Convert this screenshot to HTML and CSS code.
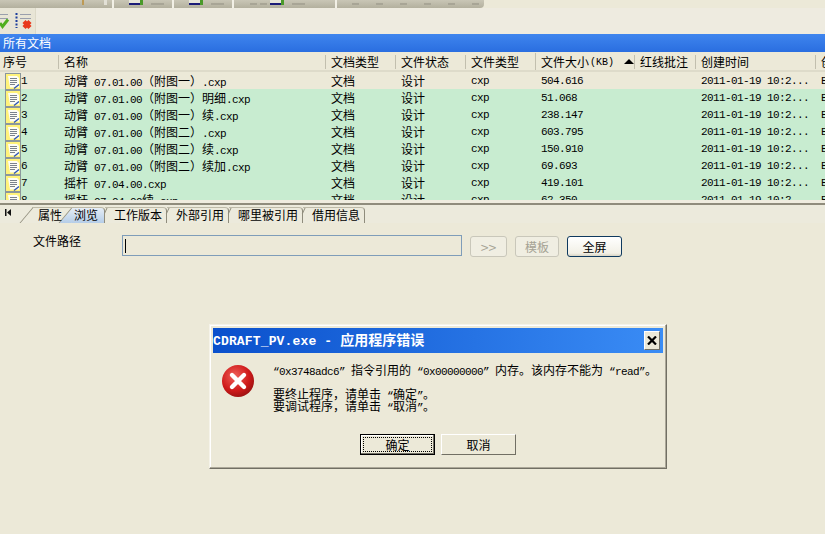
FILE: index.html
```html
<!DOCTYPE html>
<html lang="en">
<head>
  <meta charset="UTF-8">
  <title>CDRAFT_PV</title>
  <link rel="stylesheet" href="styles.css">
</head>
<body>
  <svg class="defs" width="0" height="0">
    <symbol id="doc" viewBox="0 0 16 17">
      <rect x="0.5" y="0.5" width="15" height="16" fill="#fff27a" stroke="#8b979b"/>
      <path d="M3 3h9l2 2v9.500H5z" fill="#fdfdf6"/>
      <path d="M5 5.500h7M5 7.500h7M5 9.500h7M5 11.500h5" stroke="#7a828c" fill="none"/>
      <path d="M9 15.500l5-4" stroke="#2f55b5" stroke-width="1.400" fill="none"/>
    </symbol>
  </svg>

  <div class="topbar">
    <div class="seg seg-a"><i class="dot"></i><i class="tick"></i></div>
    <div class="seg"><i class="navy"></i><i class="green"></i><i class="grey"></i></div>
    <div class="seg"><i class="navy"></i><i class="green"></i><i class="grey"></i></div>
    <div class="seg seg-b"><i class="grey-s"></i><i class="grey-s"></i><i class="navy"></i><i class="green"></i><i class="grey"></i></div>
    <div class="seg seg-c"><i class="grey-s"></i><i class="grey-s"></i><i class="grey-s"></i><i class="grey-s"></i><i class="grey-s"></i><i class="grey-s"></i></div>
  </div>

  <div class="toolbar">
    <div class="tool-group">
      <svg class="tool-a" width="10" height="18" viewBox="0 0 10 18">
        <path d="M0 1.500h8M0 5.500h8" stroke="#9a9fac" fill="none"/>
        <path d="M0 10l2.500 3.500 5.500-7" stroke="#4fae1e" stroke-width="3" fill="none"/>
      </svg>
      <svg class="tool-b" width="17" height="20" viewBox="0 0 17 20">
        <path d="M1.500 0v15" stroke="#1d3f9c" stroke-width="2" stroke-dasharray="2 1.500" fill="none"/>
        <path d="M5 1.500h11M5 5.500h11" stroke="#9a9fac" fill="none"/>
        <path d="M9 8.500l6 6M15 8.500l-6 6" stroke="#e8391d" stroke-width="4.400" fill="none"/>
      </svg>
    </div>
  </div>

  <div class="titlebar">所有文档</div>

  <div class="head grid">
    <div class="hcell first">序号</div>
    <div class="hcell">名称</div>
    <div class="hcell">文档类型</div>
    <div class="hcell">文件状态</div>
    <div class="hcell">文件类型</div>
    <div class="hcell sorted">文件大小<span class="la">(KB)</span><i class="sort-up"></i></div>
    <div class="hcell">红线批注</div>
    <div class="hcell">创建时间</div>
    <div class="hcell">创建人</div>
  </div>

  <div class="rows">
    <div class="row grid cur">
      <div class="cell num"><svg class="doc"><use href="#doc"/></svg><span class="la">1</span></div>
      <div class="cell">动臂<span class="la"> 07.01.00</span>（附图一）<span class="la">.cxp</span></div>
      <div class="cell">文档</div><div class="cell">设计</div><div class="cell la">cxp</div>
      <div class="cell la">504.616</div><div class="cell"></div>
      <div class="cell la">2011-01-19 10:2...</div><div class="cell la">E:\</div>
    </div>
    <div class="row grid">
      <div class="cell num"><svg class="doc"><use href="#doc"/></svg><span class="la">2</span></div>
      <div class="cell">动臂<span class="la"> 07.01.00</span>（附图一）明细<span class="la">.cxp</span></div>
      <div class="cell">文档</div><div class="cell">设计</div><div class="cell la">cxp</div>
      <div class="cell la">51.068</div><div class="cell"></div>
      <div class="cell la">2011-01-19 10:2...</div><div class="cell la">E:\</div>
    </div>
    <div class="row grid">
      <div class="cell num"><svg class="doc"><use href="#doc"/></svg><span class="la">3</span></div>
      <div class="cell">动臂<span class="la"> 07.01.00</span>（附图一）续<span class="la">.cxp</span></div>
      <div class="cell">文档</div><div class="cell">设计</div><div class="cell la">cxp</div>
      <div class="cell la">238.147</div><div class="cell"></div>
      <div class="cell la">2011-01-19 10:2...</div><div class="cell la">E:\</div>
    </div>
    <div class="row grid">
      <div class="cell num"><svg class="doc"><use href="#doc"/></svg><span class="la">4</span></div>
      <div class="cell">动臂<span class="la"> 07.01.00</span>（附图二）<span class="la">.cxp</span></div>
      <div class="cell">文档</div><div class="cell">设计</div><div class="cell la">cxp</div>
      <div class="cell la">603.795</div><div class="cell"></div>
      <div class="cell la">2011-01-19 10:2...</div><div class="cell la">E:\</div>
    </div>
    <div class="row grid">
      <div class="cell num"><svg class="doc"><use href="#doc"/></svg><span class="la">5</span></div>
      <div class="cell">动臂<span class="la"> 07.01.00</span>（附图二）续<span class="la">.cxp</span></div>
      <div class="cell">文档</div><div class="cell">设计</div><div class="cell la">cxp</div>
      <div class="cell la">150.910</div><div class="cell"></div>
      <div class="cell la">2011-01-19 10:2...</div><div class="cell la">E:\</div>
    </div>
    <div class="row grid">
      <div class="cell num"><svg class="doc"><use href="#doc"/></svg><span class="la">6</span></div>
      <div class="cell">动臂<span class="la"> 07.01.00</span>（附图二）续加<span class="la">.cxp</span></div>
      <div class="cell">文档</div><div class="cell">设计</div><div class="cell la">cxp</div>
      <div class="cell la">69.693</div><div class="cell"></div>
      <div class="cell la">2011-01-19 10:2...</div><div class="cell la">E:\</div>
    </div>
    <div class="row grid">
      <div class="cell num"><svg class="doc"><use href="#doc"/></svg><span class="la">7</span></div>
      <div class="cell">摇杆<span class="la"> 07.04.00.cxp</span></div>
      <div class="cell">文档</div><div class="cell">设计</div><div class="cell la">cxp</div>
      <div class="cell la">419.101</div><div class="cell"></div>
      <div class="cell la">2011-01-19 10:2...</div><div class="cell la">E:\</div>
    </div>
    <div class="row grid">
      <div class="cell num"><svg class="doc"><use href="#doc"/></svg><span class="la">8</span></div>
      <div class="cell">摇杆<span class="la"> 07.04.00</span>续<span class="la">.cxp</span></div>
      <div class="cell">文档</div><div class="cell">设计</div><div class="cell la">cxp</div>
      <div class="cell la">62.350</div><div class="cell"></div>
      <div class="cell la">2011-01-19 10:2...</div><div class="cell la">E:\</div>
    </div>
  </div>

  <div class="splitter"></div>

  <div class="tabs">
    <svg class="tab-first" width="6" height="7" viewBox="0 0 6 7">
      <path d="M0 0h1.500v7H0zM6 0v7L2 3.500z" fill="#111"/>
    </svg>
    <div class="tab t1">属性</div>
    <div class="tab t2">浏览</div>
    <div class="tab t3">工作版本</div>
    <div class="tab t3">外部引用</div>
    <div class="tab t3">哪里被引用</div>
    <div class="tab t3">借用信息</div>
  </div>

  <div class="path-row">
    <label class="path-label">文件路径</label>
    <div class="path-input"><i class="caret"></i></div>
    <button class="btn off b-go">&gt;&gt;</button>
    <button class="btn off b-tpl">模板</button>
    <button class="btn main b-full">全屏</button>
  </div>

  <div class="dialog">
    <div class="dlg-title">
      <span class="dlg-name"><span class="dlg-la">CDRAFT_PV.exe - </span>应用程序错误</span>
      <div class="dlg-close">
        <svg width="10" height="9" viewBox="0 0 10 9"><path d="M1 0.500l8 8M9 0.500l-8 8" stroke="#000" stroke-width="2.200"/></svg>
      </div>
    </div>
    <div class="dlg-body">
      <svg class="err" width="34" height="34" viewBox="0 0 34 34">
        <defs>
          <radialGradient id="red" cx="0.4" cy="0.35" r="0.75">
            <stop offset="0" stop-color="#f0615a"/>
            <stop offset="0.6" stop-color="#cf1a1a"/>
            <stop offset="1" stop-color="#8c0f0f"/>
          </radialGradient>
        </defs>
        <circle cx="17" cy="17" r="16" fill="url(#red)"/>
        <path d="M11 11l12 12M23 11l-12 12" stroke="#fff" stroke-width="4.400" stroke-linecap="round"/>
      </svg>
      <div class="msg">
        <p class="msg-1"><span class="la">“0x3748adc6” </span>指令引用的<span class="la"> “0x00000000” </span>内存。该内存不能为<span class="la"> “read”</span>。</p>
        <p>要终止程序，请单击<span class="la"> “</span>确定<span class="la">”</span>。</p>
        <p>要调试程序，请单击<span class="la"> “</span>取消<span class="la">”</span>。</p>
      </div>
    </div>
    <div class="dlg-btns">
      <button class="dbtn focus"><span>确定</span></button>
      <button class="dbtn"><span>取消</span></button>
    </div>
  </div>
</body>
</html>
```

FILE: styles.css
```css
html, body {
  margin: 0;
  height: 534px;
  overflow: hidden;
}
body {
  position: relative;
  background: #ece9d8;
  color: #000;
  font-family: "Noto Sans CJK SC", "Liberation Sans", sans-serif;
  font-size: 12px;
  line-height: 14px;
}
.defs {
  display: block;
  height: 0;
}
/* half width latin, 6px a character like the old bitmap font */
.la {
  font-family: "Liberation Mono", monospace;
  font-size: 11px;
  letter-spacing: -0.6px;
  line-height: 0;
  white-space: pre;
}

/* top strip */
.topbar {
  display: flex;
  width: 484px;
  height: 8px;
  background: linear-gradient(#c9c6b6, #b3b09e);
  border-bottom-right-radius: 4px;
  overflow: hidden;
}
.seg {
  display: flex;
  align-items: flex-start;
  gap: 3px;
  width: 60px;
  padding-left: 15px;
  box-sizing: border-box;
  border-right: 2px solid #f2f0e6;
}
.seg-a {
  width: 114px;
  padding-left: 82px;
  gap: 20px;
}
.seg-b {
  width: 103px;
  padding-left: 16px;
}
.seg-c {
  flex: 1;
  gap: 17px;
  padding-left: 15px;
  border-right: none;
}
.seg i {
  display: block;
  height: 5px;
}
.dot { width: 2px; background: #bd9a55; }
.tick { width: 3px; background: #e2e0d6; }
.navy { width: 11px; height: 3px !important; border-bottom: 2px solid #1c1c78; background: #e8e6da; }
.green { width: 3px; background: #4a9a2a; margin-left: -3px; }
.grey { width: 13px; height: 3px !important; margin-left: 5px; border-bottom: 2px solid #a8a596; }
.grey-s { width: 7px; height: 3px !important; border-bottom: 2px solid #a8a596; }

.toolbar {
  height: 26px;
  background: #eeebe0;
}
.tool-group {
  display: flex;
  gap: 5px;
  width: 36px;
  height: 26px;
  box-sizing: border-box;
  padding-top: 5px;
  background: #e8e5d6;
  border-right: 1px solid #dcd9c8;
}

.titlebar {
  height: 18px;
  padding-left: 3px;
  color: #fff;
  line-height: 18px;
  background: linear-gradient(#3f85ee, #2a6ee0);
}

/* file list */
.grid {
  display: grid;
  grid-template-columns: 58px 267px 70px 70px 70px 99px 61px 120px 10px;
  width: 825px;
}
.head {
  height: 20px;
  align-items: center;
  padding-top: 1px;
  background: #ece9d8;
  box-sizing: border-box;
  border-bottom: 2px solid #dedbca;
}
.hcell {
  padding-left: 5px;
  border-left: 1px solid #c2bfae;
  line-height: 14px;
  white-space: nowrap;
}
.hcell.first {
  padding-left: 3px;
  border-left: none;
}
.hcell:last-child,
.cell:last-child {
  overflow: hidden;
}
.sorted {
  display: flex;
  align-items: center;
}
.sorted .la {
  margin: 3px 0 0 1px;
  font-size: 10px;
  line-height: 14px;
  letter-spacing: 0;
}
.sort-up {
  width: 0;
  height: 0;
  margin-left: 10px;
  border-left: 5px solid transparent;
  border-right: 5px solid transparent;
  border-bottom: 5px solid #000;
}
.rows {
  height: 128px;
  overflow: hidden;
}
.row {
  height: 17px;
  background: #c8ecd0;
}
.row.cur {
  background: #ece9d8;
}
.cell {
  padding-left: 6px;
  line-height: 17px;
  white-space: nowrap;
}
.cell.la {
  line-height: 18px;
}
.num {
  display: flex;
  align-items: center;
  padding-left: 5px;
}
.num .la {
  line-height: 17px;
}
.doc {
  width: 16px;
  height: 17px;
  flex: none;
}

.splitter {
  height: 5px;
  box-sizing: border-box;
  background: #efecdf;
  border-bottom: 2px solid #8f8c7c;
}

/* tabs */
.tabs {
  display: flex;
  align-items: stretch;
  isolation: isolate;
  height: 18px;
  padding-left: 5px;
  background: #eceadc;
}
.tab-first {
  margin: 4px 22px 0 0;
}
.tab {
  position: relative;
  height: 15px;
  margin-top: 2px;
  border-top: 1px solid #bdbaa8;
  border-right: 1px solid #8f8c7c;
  border-top-right-radius: 4px;
  white-space: nowrap;
}
.tab::before {
  content: "";
  position: absolute;
  top: -1px;
  left: 0;
  width: 12px;
  height: 15px;
  border-top: 1px solid #bdbaa8;
  border-left: 1px solid #8f8c7c;
  transform: skewX(-40deg);
  transform-origin: top left;
  background: inherit;
  z-index: -1;
}
.tab.t1 {
  width: 34px;
  padding-left: 5px;
  border-right: none;
  border-radius: 0;
}
.tab.t2 {
  width: 30px;
  padding-left: 2px;
  background: linear-gradient(#e6edf5, #b5cde8);
}
.tab.t3 {
  padding: 0 4px 0 9px;
}
.tab.t3::before {
  left: 2px;
  width: 3px;
  height: 7px;
  border-top: none;
  transform: skewX(-25deg);
}

/* path line */
.path-row {
  display: flex;
  align-items: flex-start;
  padding: 12px 0 0 33px;
}
.path-label {
  width: 89px;
  line-height: 12px;
}
.path-input {
  width: 340px;
  height: 21px;
  box-sizing: border-box;
  padding: 3px 0 0 2px;
  border: 1px solid #7f9db9;
  background: #ece9d8;
}
.caret {
  display: block;
  width: 1px;
  height: 14px;
  background: #000;
}
.btn {
  height: 21px;
  margin-top: 1px;
  margin-left: 8px;
  padding: 0;
  font: inherit;
  border-radius: 3px;
  background: #f0eee2;
}
.btn.off {
  color: #a5a294;
  border: 1px solid #c9c7ba;
}
.btn.main {
  color: #000;
  border: 1px solid #0f3a5f;
  background: linear-gradient(#fff, #f2f0e6 85%, #d8d4c4);
}
.b-go { width: 37px; font-size: 14px; }
.b-tpl { width: 44px; }
.b-full { width: 55px; }

/* error box */
.dialog {
  position: absolute;
  left: 209px;
  top: 324px;
  width: 458px;
  height: 145px;
  box-sizing: border-box;
  padding: 3px;
  background: #ece9d8;
  border: 1px solid #f5f3ea;
  border-right-color: #716f64;
  border-bottom-color: #716f64;
  box-shadow: inset -1px -1px 0 #aca899, inset 1px 1px 0 #fff;
}
.dlg-title {
  display: flex;
  align-items: center;
  justify-content: space-between;
  height: 25px;
  padding: 0 3px 0 0;
  color: #fff;
  font-size: 14px;
  font-weight: 700;
  background: linear-gradient(90deg, #0a50cc, #3a8cf5);
}
.dlg-name {
  white-space: pre;
}
.dlg-la {
  font-family: "Liberation Mono", monospace;
  font-size: 13px;
  letter-spacing: 0.15px;
}
.dlg-close {
  display: flex;
  align-items: center;
  justify-content: center;
  width: 16px;
  height: 19px;
  box-sizing: border-box;
  background: #ece9d8;
  border: 1px solid #fff;
  border-right-color: #716f64;
  border-bottom-color: #716f64;
}
.dlg-body {
  display: flex;
  align-items: flex-start;
  padding: 11px 0 0 8px;
}
.err {
  flex: none;
}
.msg {
  margin-left: 18px;
  line-height: 12px;
}
.msg p {
  margin: 0;
  white-space: nowrap;
}
.msg .msg-1 {
  margin-bottom: 12px;
}
.dlg-btns {
  display: flex;
  gap: 6px;
  padding: 22px 0 0 147px;
}
.dbtn {
  width: 75px;
  height: 21px;
  padding: 2px;
  font: inherit;
  background: #ece9d8;
  border: 1px solid #fff;
  border-right-color: #716f64;
  border-bottom-color: #716f64;
}
.dbtn span {
  display: block;
  height: 100%;
  line-height: 15px;
}
.dbtn.focus {
  border: 1px solid #000;
  box-shadow: inset -1px -1px 0 #716f64, inset 1px 1px 0 #fff;
}
.dbtn.focus span {
  outline: 1px dotted #000;
  outline-offset: -1px;
}
```
